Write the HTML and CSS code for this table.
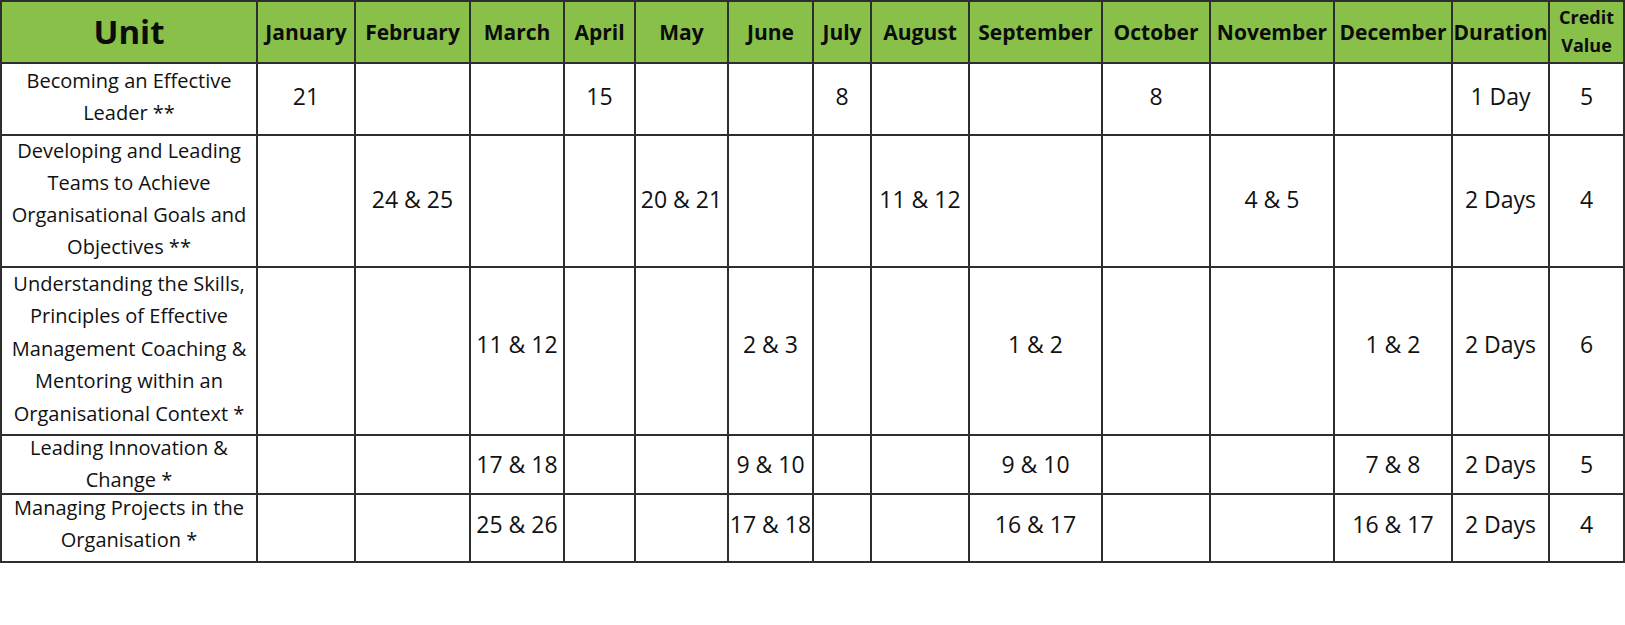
FILE: index.html
```html
<!DOCTYPE html>
<html lang="en">
<head>
<meta charset="utf-8">
<title>Unit Schedule</title>
<link rel="stylesheet" href="styles.css">
</head>
<body>
<table class="schedule">
  <colgroup>
    <col class="c-unit">
    <col class="c-jan"><col class="c-feb"><col class="c-mar"><col class="c-apr">
    <col class="c-may"><col class="c-jun"><col class="c-jul"><col class="c-aug">
    <col class="c-sep"><col class="c-oct"><col class="c-nov"><col class="c-dec">
    <col class="c-dur"><col class="c-cred">
  </colgroup>
  <thead>
    <tr class="head">
      <th class="unit-head">Unit</th>
      <th>January</th><th>February</th><th>March</th><th>April</th>
      <th>May</th><th>June</th><th>July</th><th>August</th>
      <th>September</th><th>October</th><th>November</th><th>December</th>
      <th>Duration</th><th class="credit-head">Credit<br>Value</th>
    </tr>
  </thead>
  <tbody>
    <tr class="r1">
      <td class="unit"><div class="unit-text">Becoming an Effective<br>Leader **</div></td>
      <td>21</td><td></td><td></td><td>15</td><td></td><td></td><td>8</td><td></td><td></td><td>8</td><td></td><td></td>
      <td>1 Day</td><td>5</td>
    </tr>
    <tr class="r2">
      <td class="unit"><div class="unit-text">Developing and Leading<br>Teams to Achieve<br>Organisational Goals and<br>Objectives **</div></td>
      <td></td><td>24 &amp; 25</td><td></td><td></td><td>20 &amp; 21</td><td></td><td></td><td>11 &amp; 12</td><td></td><td></td><td>4 &amp; 5</td><td></td>
      <td>2 Days</td><td>4</td>
    </tr>
    <tr class="r3">
      <td class="unit"><div class="unit-text">Understanding the Skills,<br>Principles of Effective<br>Management Coaching &amp;<br>Mentoring within an<br>Organisational Context *</div></td>
      <td></td><td></td><td>11 &amp; 12</td><td></td><td></td><td>2 &amp; 3</td><td></td><td></td><td>1 &amp; 2</td><td></td><td></td><td>1 &amp; 2</td>
      <td>2 Days</td><td>6</td>
    </tr>
    <tr class="r4">
      <td class="unit"><div class="unit-text">Leading Innovation &amp;<br>Change *</div></td>
      <td></td><td></td><td>17 &amp; 18</td><td></td><td></td><td>9 &amp; 10</td><td></td><td></td><td>9 &amp; 10</td><td></td><td></td><td>7 &amp; 8</td>
      <td>2 Days</td><td>5</td>
    </tr>
    <tr class="r5">
      <td class="unit"><div class="unit-text">Managing Projects in the<br>Organisation *</div></td>
      <td></td><td></td><td>25 &amp; 26</td><td></td><td></td><td>17 &amp; 18</td><td></td><td></td><td>16 &amp; 17</td><td></td><td></td><td>16 &amp; 17</td>
      <td>2 Days</td><td>4</td>
    </tr>
  </tbody>
</table>
</body>
</html>
```
FILE: styles.css
```css
html, body {
  margin: 0;
  padding: 0;
  background: #ffffff;
}

body {
  font-family: "Open Sans", Lato, "Liberation Sans", sans-serif;
  color: #111111;
}

.schedule {
  border-collapse: collapse;
  table-layout: fixed;
  width: 1623px;
}

.c-unit { width: 256px; }
.c-jan { width: 98px; }
.c-feb { width: 115px; }
.c-mar { width: 94px; }
.c-apr { width: 71px; }
.c-may { width: 93px; }
.c-jun { width: 85px; }
.c-jul { width: 58px; }
.c-aug { width: 98px; }
.c-sep { width: 133px; }
.c-oct { width: 108px; }
.c-nov { width: 124px; }
.c-dec { width: 118px; }
.c-dur { width: 97px; }
.c-cred { width: 75px; }

.schedule th,
.schedule td {
  border: 2px solid #2e2e2e;
  padding: 0;
  text-align: center;
  vertical-align: middle;
  white-space: nowrap;
}

.schedule th {
  background: #88c04a;
  font-weight: 700;
  font-size: 21px;
  line-height: 30px;
  color: #0c0c0c;
  padding-bottom: 1px;
}

.schedule th.unit-head {
  font-size: 33px;
}

.schedule th.credit-head {
  font-size: 18px;
  line-height: 28px;
  padding-bottom: 3px;
}

.schedule td {
  font-size: 23px;
  line-height: 32px;
  padding-bottom: 5px;
}

.schedule td.unit {
  font-size: 20px;
  line-height: 32px;
  padding-bottom: 0;
}

.unit-text {
  margin: -2px 0 2px;
}

.head { height: 62px; }
.r1 { height: 72px; }
.r2 { height: 132px; }
.r3 { height: 168px; }
.r4 { height: 59px; }
.r5 { height: 68px; }

.r1 td { padding-bottom: 6px; }
.r3 td { padding-bottom: 14px; }
.r3 td.unit { line-height: 32.5px; padding-bottom: 0; }
.r4 td { padding-bottom: 1px; }
.r4 .unit-text { margin: -7px 0 -6px; }
.r5 td { padding-bottom: 9px; }
.r5 td.unit { padding-bottom: 0; }
.r5 .unit-text { margin: -6px 0 2px; }
```
